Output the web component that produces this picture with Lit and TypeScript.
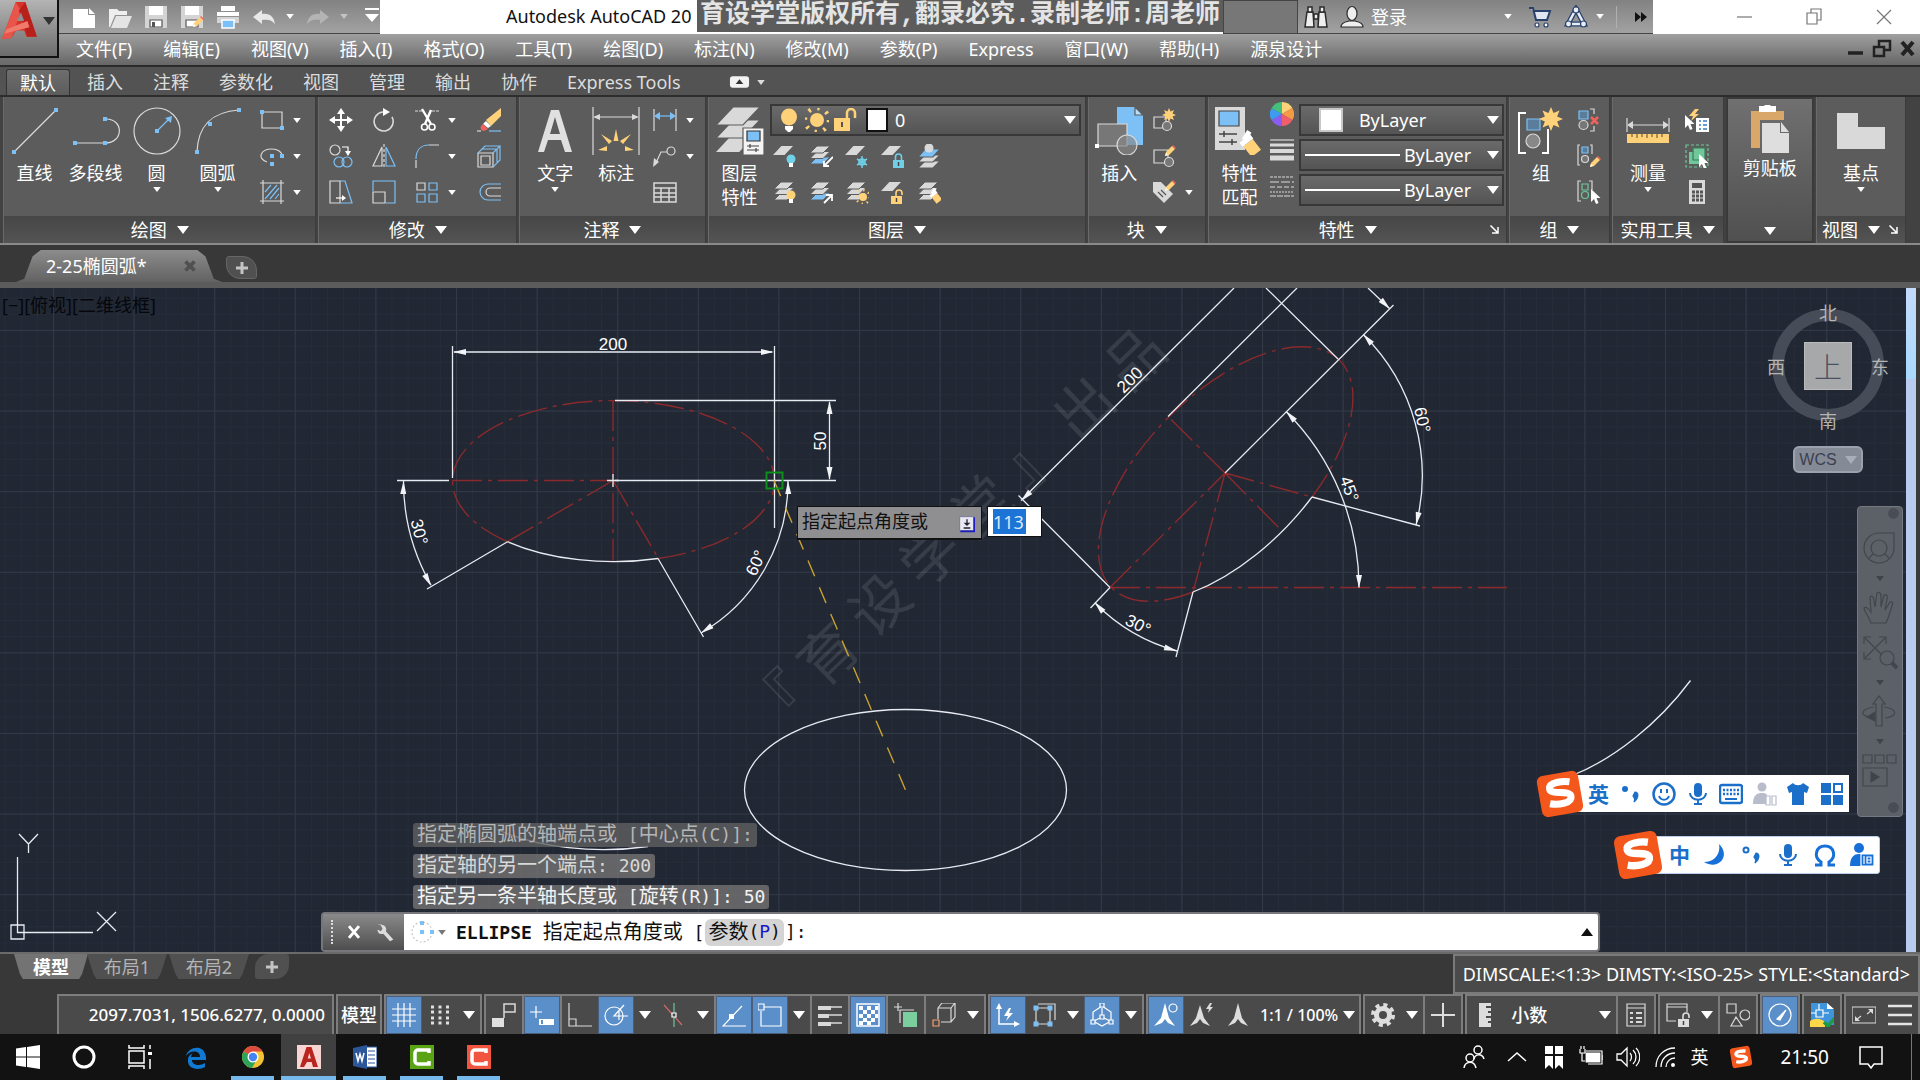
import { LitElement, html, svg, css, nothing } from "lit";
import { customElement } from "lit/decorators.js";
import { classMap } from "lit/directives/class-map.js";

const sq = (x: number, y: number, s = 4) =>
  svg`<rect x=${x - s / 2} y=${y - s / 2} width=${s} height=${s} fill="#7cc0f5" stroke="none"/>`;

const sheet = (x: number, y: number, fill = "#d9d9d9", w = 20, h = 9) =>
  svg`<path d="M${x + w * 0.42} ${y}h${w * 0.58}l${-w * 0.42} ${h}h${-w * 0.58}z" fill=${fill} stroke="none"/>`;

const stack = (top = "#d9d9d9", bottom = "#d9d9d9") => svg`
  <g stroke="#5c5c5c" stroke-width="1">
    <path d="M8 13h13l-7 7H1z" fill=${bottom}/>
    <path d="M8 7.500h13l-7 7H1z" fill="#d9d9d9"/>
    <path d="M8 2h13l-7 7H1z" fill=${top}/>
  </g>`;

const bulb = (x: number, y: number, c: string) => svg`
  <circle cx=${x} cy=${y} r="4.500" fill=${c} stroke="none"/>
  <rect x=${x - 2} y=${y + 4} width="4" height="4" fill="#fff" stroke="none"/>`;

const lock = (x: number, y: number, c: string, open = false) => svg`
  <rect x=${x} y=${y} width="11" height="8" fill=${c} stroke="none"/>
  <path d=${open ? `M${x + 5} ${y}v-3a3 3 0 0 1 6 0v2` : `M${x + 2.5} ${y}v-3a3 3 0 0 1 6 0v3`} stroke=${c} stroke-width="1.600"/>
  <path d="M${x + 5.5} ${y + 2}v4" stroke="#444" stroke-width="1.500"/>`;

const pencil = (x: number, y: number) => svg`
  <g transform="translate(${x} ${y})" stroke="none">
    <path d="M0 10l1-4 6-6 3 3-6 6z" fill="#ffd27a"/>
    <path d="M7 0l1-1 3 3-1 1z" fill="#f0635c"/><path d="M0 10l1-3 2 2z" fill="#fff"/>
  </g>`;

const star = (x: number, y: number, r: number) => {
  const pts: string[] = [];
  for (let i = 0; i < 16; i++) {
    const a = (Math.PI * i) / 8;
    const k = i % 2 ? r * 0.55 : r;
    pts.push(`${x + Math.sin(a) * k},${y - Math.cos(a) * k}`);
  }
  return svg`<polygon points=${pts.join(" ")} fill="#ffd27a" stroke="none"/>`;
};

const sun = (x: number, y: number, r: number) => svg`
  <circle cx=${x} cy=${y} r=${r} fill="#ffd27a" stroke="none"/>
  <circle cx=${x} cy=${y} r=${r * 1.7} stroke="#ffd27a" stroke-width=${r * 0.6} stroke-dasharray="${r * 0.35} ${r * 0.985}"/>`;

const brush = (x: number, y: number) => svg`
  <g transform="translate(${x} ${y}) rotate(-38)" stroke="none">
    <rect x="-3.500" y="-1" width="7" height="8" fill="#ffd27a"/><rect x="-4" y="-4" width="8" height="3" fill="#fff"/>
    <rect x="-1.500" y="-9" width="3" height="6" fill="#fff" transform="rotate(70 0 -4)"/>
  </g>`;

const cursor = (x: number, y: number) =>
  svg`<path transform="translate(${x} ${y})" d="M0 0v13l3-3 2 5 2.500-1-2-5h4z" fill="#fff" stroke="none"/>`;

const sLogo = svg`
  <g transform="rotate(-10 12 12)">
    <rect x="2" y="2" width="20" height="20" rx="3" fill="#f4571c" stroke="none"/>
    <path d="M17.500 7c-3-1-10-1.500-10 1.700 0 3.300 9.500 2 9.500 5.300 0 3.200-6.500 3.300-10.500 1.800" stroke="#fff" stroke-width="3.400"/>
  </g>`;

const aMark = (c: string) => svg`<path d="M9.500 2h5l6.500 20h-5l-1.400-5H10l-3 5H3z M10.700 13.500h3.200L12.300 8z" fill=${c} fill-rule="evenodd" stroke="none"/>`;

const ICONS: Record<string, any> = {
  appLogo: svg`
    <path d="M13 0h9l11 33h-10l-2-6h-8l-4 7-9 1z" fill="#d8332b"/><path d="M13 0L0 35l9-1L18 8z" fill="#e8554b"/>
    <path d="M22 0l11 33h-9L16 8z" fill="#b8201c"/><path d="M4 26l20-8 2 6-24 6z" fill="#f07b6c"/><path d="M14 18l4-8 3 8z" fill="#8f8f8f"/>`,
  newDoc: svg`<path d="M1 4h15v6h7v13H1z M17 3l6 6h-6z" fill="#fff" stroke="none"/>`,
  open: svg`<path d="M1 4h8l2 2h8v4H7L2 22H1z" fill="#eee" stroke="none"/><path d="M8 11h16l-5 12H3z" fill="#e4e4e4" stroke="none"/>`,
  save: svg`<path d="M1 1h22v22H1z" fill="#d4d4d4" stroke="none"/><path d="M5 1h14v9H5z" fill="#fff" stroke="none"/><path d="M6 15h12v7H6z" fill="#fff" stroke="#555"/><path d="M8 17h3v5H8z" fill="#555" stroke="none"/>`,
  saveAs: svg`<path d="M1 1h22v22H1z" fill="#d4d4d4" stroke="none"/><path d="M5 1h14v9H5z" fill="#fff" stroke="none"/><path d="M6 15h12v7H6z" fill="#fff" stroke="#555"/>${pencil(13, 12)}`,
  print: svg`<path d="M5 1h14v5H5z" fill="#fff" stroke="none"/><path d="M1 7h22v4H1z" fill="#fff" stroke="none"/><path d="M1 12h22v6H1z" fill="#d4d4d4" stroke="none"/><path d="M6 15h12v8H6z" fill="#7cc0f5" stroke="#fff" stroke-width="1.500"/>`,
  undo: svg`<path d="M1 12l9-7v4c8-1 12 3 13 10-3-4-7-5-13-4v4z" fill="#e8e8e8" stroke="none"/>`,
  redo: svg`<path d="M23 12l-9-7v4C6 8 2 12 1 19c3-4 7-5 13-4v4z" fill="#b4b4b4" stroke="none"/>`,
  qatMore: svg`<path d="M5 4h14" stroke="#fff" stroke-width="2"/><path d="M5 9h14l-7 8z" fill="#fff" stroke="none"/>`,
  binoc: svg`<g fill="#eee" stroke="#2b2b2b" stroke-width="1.500"><path d="M3 7h6l1 15H1z M15 7h6l2 15h-9z"/><path d="M4 2h4v5H4z M16 2h4v5h-4z M10 9h4v5h-4z"/></g>`,
  user: svg`<g fill="#eee" stroke="#2b2b2b" stroke-width="1.200"><path d="M1 22c0-5 5-5 8-6h6c3 1 8 1 8 6z"/><ellipse cx="12" cy="8.500" rx="5" ry="7"/></g>`,
  cart: svg`<path d="M1 3h4l3 12h11l3-9H6" fill="#dfe6ef" stroke="#28406b" stroke-width="2"/><circle cx="9" cy="20" r="2" fill="#fff" stroke="#28406b"/><circle cx="18" cy="20" r="2" fill="#fff" stroke="#28406b"/>`,
  share: svg`<path d="M12 4L4 19h16z" stroke="#28406b" stroke-width="5"/><path d="M12 4L4 19h16z" stroke="#e8edf5" stroke-width="2.500"/><g fill="#e8edf5" stroke="#28406b"><circle cx="12" cy="5" r="3"/><circle cx="4.500" cy="19" r="3"/><circle cx="19.500" cy="19" r="3"/></g>`,
  more: svg`<path d="M6 7l6 5-6 5z M12 7l6 5-6 5z" fill="#111" stroke="none"/>`,
  winMin: svg`<path d="M5 12h15" stroke="#777"/>`,
  winMax: svg`<path d="M5 8h10v11H5z M9 8V4h10v11h-4" stroke="#777"/>`,
  winClose: svg`<path d="M5 5l14 14M19 5L5 19" stroke="#777"/>`,
  docMin: svg`<path d="M4 16h15" stroke="#222" stroke-width="3.500"/>`,
  docMax: svg`<path d="M4 10h10v9H4z M9 10V4h11v9h-6" stroke="#222" stroke-width="2.500"/>`,
  docClose: svg`<path d="M6 5l11 13M17 5L6 18" stroke="#222" stroke-width="4"/>`,
  line: svg`<path d="M3 45L45 3"/>${sq(3, 45)}${sq(45, 3)}`,
  pline: svg`<path d="M3 36h30c19 0 19-24 1-24"/>${sq(3, 36)}${sq(33, 36)}${sq(33, 12)}`,
  circle: svg`<circle cx="24" cy="24" r="23"/><path d="M24 24L36 12" stroke="#7cc0f5"/><path d="M39 9l-1 7-6-5z" fill="#7cc0f5" stroke="none"/>${sq(24, 24)}`,
  arc: svg`<path d="M3 45C4 18 18 5 45 3"/>${sq(3, 45)}${sq(16, 17)}${sq(45, 3)}`,
  rect: svg`<path d="M2 4h20v16H2z"/>${sq(2, 4)}${sq(22, 20)}`,
  ellipse: svg`<path d="M7 18C-3 15 0 5 12 5c6 0 10 3 10 7"/>${sq(12, 12)}${sq(22, 12)}${sq(12, 20)}`,
  hatch: svg`<path d="M0 3h24M0 21h24M3 0v24M21 0v24"/><path d="M5 12l6-7M5 19L17 5M10 19l9-11M15 19l4-5" stroke="#7cc0f5"/>`,
  move: svg`<path d="M12 2v20M2 12h20" stroke="#fff" stroke-width="2"/><path d="M12 0l4 6H8z M12 24l4-6H8z M0 12l6-4v8z M24 12l-6-4v8z" fill="#fff" stroke="none"/>`,
  rotate: svg`<path d="M11 4a9.500 9.500 0 1 0 9 5" stroke-width="1.600"/><path d="M11 0l7 4-7 4z" fill="#fff" stroke="none"/>`,
  trim: svg`<path d="M0 3h9M17 3h7" stroke-dasharray="3 1"/><path d="M7 1l9 15M16 2l-6 14" stroke="#fff" stroke-width="2.400"/><circle cx="9.500" cy="19" r="3" stroke="#fff" stroke-width="1.600"/><circle cx="17" cy="19" r="3" stroke="#fff" stroke-width="1.600"/>`,
  erase: svg`<path d="M9 12L24 0v8L14 18z" fill="#ffd27a" stroke="none"/><path d="M9 13l5 5-3 2-5-4z" fill="#fff" stroke="none"/><path d="M6 16l5 5-4 2c-3 0-4-3-3-5z" fill="#f0635c" stroke="none"/><path d="M0 23h4"/><path d="M12 23h12" stroke="#7cc0f5"/>`,
  copy: svg`<circle cx="6" cy="6" r="5"/><circle cx="10" cy="18" r="5" stroke="#7cc0f5"/><circle cx="18" cy="18" r="5" stroke="#7cc0f5"/><path d="M13 3h6v4" stroke="#fff"/><path d="M16 7h6l-3 5z" fill="#fff" stroke="none"/>`,
  mirror: svg`<path d="M10 3v19H1z"/><path d="M14 3v19h9z" stroke="#7cc0f5"/><path d="M12 0v24" stroke-dasharray="3 2"/>`,
  fillet: svg`<path d="M1 15C1 6 6 1 14 1" stroke="#7cc0f5"/><path d="M14 1h10M1 16v8"/>`,
  box3d: svg`<path d="M1 9h15v14H1z"/><path d="M4 12h9v9H4z"/><path d="M1 9l7-7h15l-7 7M23 2v14l-7 7M20 5v13M5 5h14" stroke="#7cc0f5"/>`,
  stretch: svg`<path d="M1 1h10v22H1z"/><path d="M11 1h5l7 22H11" stroke="#7cc0f5"/><path d="M7 18h8" stroke="#fff"/><path d="M13 15l4 3-4 3z" fill="#fff" stroke="none"/>`,
  scale: svg`<path d="M1 11V1h22v22H14" stroke="#7cc0f5"/><path d="M1 12h12v11H1z"/>`,
  array: svg`<path d="M2 3h8v7H2z"/><path d="M14 3h8v7h-8z M2 14h8v8H2z M14 14h8v8h-8z" stroke="#7cc0f5"/>`,
  offset: svg`<path d="M24 8H13a4 4 0 0 0 0 8h11"/><path d="M24 4H11a8 8 0 0 0 0 16h13" stroke="#7cc0f5"/>`,
  text: svg`<path d="M20 3h8l13 42h-7l-4-12H17l-4 12H7z M19 27h10L24 10z" fill="#e0e0e0" stroke="none" fill-rule="evenodd"/>`,
  dim: svg`<path d="M1 0v48M47 0v48M4 10h40"/><path d="M1 10l7-3v6z M47 10l-7-3v6z" fill="#d9d9d9" stroke="none"/>
    <g fill="#ffd27a" stroke="none"><path d="M21.500 34l2.500-12 2.500 12z M17 37l-8-10 11 7z M31 37l8-10-11 7z M15 44l-9-1 9-4z M33 44l9-1-9-4z"/></g>`,
  linear: svg`<path d="M1 1v22M23 1v22"/><path d="M4 8h16" stroke="#7cc0f5"/><path d="M1 8l6-4v8z M23 8l-6-4v8z" fill="#7cc0f5" stroke="none"/>`,
  leader: svg`<path d="M2 21l6-13h6"/><circle cx="18" cy="7" r="4"/><path d="M0 23l1-9 5 4z" fill="#d9d9d9" stroke="none"/>`,
  table: svg`<path d="M1 3h22v19H1z M1 8h22M1 13h22M1 17h22M8 8v14M16 8v14" stroke-width="1.500"/>`,
  layers: svg`${sheet(0, 27, "#d9d9d9", 40, 18)}<g stroke="#5c5c5c"><path d="M17 13h27L27 31H0z" fill="#d9d9d9"/><path d="M17 0h27L27 18H0z" fill="#d9d9d9"/></g>
    <path d="M27 21h21v27H27z" fill="#f4f4f4" stroke="#5c5c5c"/><path d="M31 24h13v10H31z" fill="#7cc0f5" stroke="#333"/><path d="M31 39h12M31 43h12M34 37v4M40 41v4" stroke="#444"/>`,
  bulb: svg`<ellipse cx="12" cy="9" rx="8" ry="8.500" fill="#ffd27a" stroke="none"/><path d="M8 18h8v3l-3 3h-2l-3-3z" fill="#fff" stroke="none"/>`,
  sunBig: svg`${sun(12, 12, 7)}`,
  lockBig: svg`<path d="M1 10h16v13H1z" fill="#ffd27a" stroke="none"/><path d="M14 10V5a4 4 0 0 1 8 0v5" stroke="#ffd27a" stroke-width="2.500"/><path d="M9 14v5" stroke="#555" stroke-width="2"/>`,
  layOff: svg`${sheet(0, 2)}${bulb(18, 15, "#6fd0e8")}`,
  layPrev: svg`${stack("#d9d9d9", "#7cc0f5")}<path d="M24 13l-8 8M15 17v5h5" stroke="#fff" stroke-width="1.800"/>`,
  layFrz: svg`${sheet(0, 2)}<g stroke="#6fd0e8" stroke-width="1.500"><path d="M17 12v12M12 15l10 6M22 15l-10 6"/><circle cx="17" cy="18" r="3"/></g>`,
  layLock: svg`${sheet(0, 2)}${lock(12, 16, "#6fd0e8")}`,
  layCur: svg`<g stroke="#5c5c5c"><path d="M8 17h15l-7 7H1z" fill="#d9d9d9"/><path d="M8 11h15l-7 7H1z" fill="#d9d9d9"/><path d="M8 5h15l-7 8H1z" fill="#7cc0f5"/></g><circle cx="12" cy="4" r="4.500" fill="#d9d9d9" stroke="none"/>`,
  layOn: svg`${stack()}${bulb(18, 15, "#ffd27a")}`,
  layIso: svg`${stack("#d9d9d9", "#7cc0f5")}<path d="M15 23l8-8M17 15h6v6" stroke="#fff" stroke-width="1.800"/>`,
  layThaw: svg`${stack()}${sun(18, 17, 4)}`,
  layUnlock: svg`${sheet(0, 2)}${lock(10, 16, "#ffd27a", true)}`,
  layMatch: svg`${stack()}${brush(18, 16)}`,
  insert: svg`<path d="M22 0h18l8 8v30H22z" fill="#7cc0f5" stroke="none"/><path d="M40 0v8h8z" fill="#b9defa" stroke="#5c5c5c"/><path d="M3 17h29v22H3z" fill="#777"/><circle cx="32" cy="38" r="10" fill="#888a" /><path d="M0 37h4v4H0z" fill="#fff" stroke="none"/>`,
  blkNew: svg`<path d="M2 9h12v11H2z"/><circle cx="15" cy="18" r="4.500" fill="#777"/>${star(17, 7, 7)}`,
  blkEdit: svg`<path d="M2 6h14v13H2z"/><circle cx="17" cy="18" r="4.500" fill="#777"/>${pencil(13, 2)}`,
  blkAttr: svg`<path d="M1 2h8l12 12-9 9L1 12z" fill="#d9d9d9" stroke="none"/><path d="M6 12l5 5M9 10l5 5" stroke="#555"/>${pencil(13, 1)}`,
  match: svg`<path d="M0 0h30v43H0z" fill="#d9d9d9" stroke="none"/><path d="M4 4h20v15H4z" fill="#7cc0f5" stroke="#444"/><path d="M4 27h18M4 35h18M9 24v6M17 32v6" stroke="#444" stroke-width="1.500"/><g transform="translate(34 37) scale(1.700)">${brush(0, 0)}</g>`,
  wheel: svg`<g stroke="none"><path d="M12 12V0a12 12 0 0 1 10.400 6z" fill="#ffd27a"/><path d="M12 12l10.400-6a12 12 0 0 1 0 12z" fill="#f79a45"/><path d="M12 12l10.400 6A12 12 0 0 1 12 24z" fill="#ee5f6b"/><path d="M12 12v12a12 12 0 0 1-10.400-6z" fill="#8a5cf0"/><path d="M12 12L1.600 18a12 12 0 0 1 0-12z" fill="#3d9cf0"/><path d="M12 12L1.600 6A12 12 0 0 1 12 0z" fill="#45c07b"/></g>`,
  lweight: svg`<path d="M0 2h24" /><path d="M0 7h24" stroke-width="3"/><path d="M0 13h24" stroke-width="4"/><path d="M0 20h24" stroke-width="5"/>`,
  ltype: svg`<path d="M0 3h24" stroke-dasharray="3 1"/><path d="M0 8h24" stroke-dasharray="9 2"/><path d="M0 13h24" stroke-dasharray="5 2"/><path d="M0 18h24" stroke-dasharray="2 1"/><path d="M0 22h24" stroke-dasharray="6 1"/>`,
  group: svg`<path d="M9 6H2v40h7M25 46h6V22" stroke="#fff" stroke-width="2"/><path d="M10 12h13v11H10z" fill="#5b7d9c" stroke="#7cc0f5"/><circle cx="16" cy="34" r="7" fill="#888"/>${star(34, 12, 12)}`,
  grpOff: svg`<path d="M2 3h9v8H2z" fill="#5b7d9c" stroke="#7cc0f5"/><circle cx="6.500" cy="17" r="4.500" fill="#777"/><path d="M13 1h4v5M17 18v5h-4"/><path d="M14 9l7 7M21 9l-7 7" stroke="#f0635c" stroke-width="2.500"/>`,
  grpEdit: svg`<path d="M3 1H1v20h2M13 1h2v9M13 21h0"/><path d="M5 3h6v6H5z" fill="#5b7d9c" stroke="#7cc0f5"/><circle cx="8" cy="15" r="3.500" fill="#777"/>${pencil(13, 13)}`,
  grpSel: svg`<path d="M4 1H1v20h3M12 1h3v9"/><path d="M5 4h6v6H5z" stroke="#6fc79a"/><circle cx="8" cy="15" r="3.500" stroke="#6fc79a"/>${cursor(14, 9)}`,
  measure: svg`<path d="M3 11v14M45 11v14M5 18h38"/><path d="M3 18l6-4v8z M45 18l-6-4v8z" fill="#d9d9d9" stroke="none"/><path d="M3 27h42v9H3z" fill="#ffd27a" stroke="none"/><path d="M8 27v3M13 27v4M18 27v3M23 27v4M28 27v3M33 27v4M38 27v3" stroke="#7a6030"/>`,
  qselect: svg`<path d="M10 1l-6 7h4l-2 5 8-7h-4l4-5z" fill="#ffd27a" stroke="none"/><path d="M11 10h13v14H11z" fill="#fff" stroke="none"/><path d="M14 13h2M14 17h2M14 21h2M18 13h4M18 17h4M18 21h4" stroke="#3a7cc0" stroke-width="1.500"/>${cursor(0, 7)}`,
  selAll: svg`<path d="M1 1h22v22H1z" stroke="#6fc79a" stroke-dasharray="3 2"/><path d="M4 8h12v12H4z" fill="#6fc79a" stroke="none"/><path d="M8 4h12v12H8z" fill="#6fc79a" stroke="#3b7a59"/>${cursor(14, 10)}`,
  calc: svg`<path d="M4 0h16v24H4z" fill="#d9d9d9" stroke="none"/><path d="M7 3h10v5H7z" fill="#555" stroke="none"/><path d="M7 12h3M11 12h3M15 12h3M7 16h3M11 16h3M15 16h3M7 20h3M11 20h3M15 20h3" stroke="#555" stroke-width="3"/>`,
  paste: svg`<path d="M5 6h33v9H14v28H5z" fill="#d9a76a" stroke="none"/><path d="M13 1h5a4 3 0 0 1 7 0h5v6H13z" fill="#fff" stroke="none"/><path d="M16 18h18v10h9v20H16z M35 17l8 10h-8z" fill="#dedede" stroke="none"/>`,
  base: svg`<path d="M0 6h21v14h27v22H0z" fill="#d9d9d9" stroke="none"/>`,
  corner: svg`<path d="M6 6l9 9M16 8v8H8" stroke="#fff" stroke-width="2"/>`,
  minimize: svg`<rect x="1" y="1" width="20" height="12" rx="3" fill="#f2f2f2" stroke="none"/><path d="M11 4l4 5H7z" fill="#333" stroke="none"/>`,
  plus: svg`<path d="M12 6v12M6 12h12" stroke="#c4c4c4" stroke-width="3"/>`,
  cross: svg`<path d="M6 6l12 12M18 6L6 18" stroke="#505050" stroke-width="5"/>`,
  cmdX: svg`<path d="M6 5l12 14M18 5L6 19" stroke="#fff" stroke-width="3.500"/>`,
  wrench: svg`<path d="M3 3l4 1 2 4-2 3-4-2c0 5 4 6 7 5l8 9 4-2-9-10c2-4-2-9-8-8z" fill="#ddd" stroke="none"/>`,
  cmdEl: svg`<circle cx="12" cy="12" r="10" stroke="#c9c9c9" stroke-dasharray="2 2"/>${sq(12, 3)}${sq(12, 12)}${sq(22, 12)}`,
  nWheel: svg`<path d="M17 2h15v16a15 15 0 1 1-15-16z"/><circle cx="17" cy="17" r="8"/><path d="M11 23l-4 4M23 23l4 4"/>`,
  nHand: svg`<path d="M9 33C6 25 2 21 2 18c2-2 5 1 7 4L8 7c2-2 4 0 4 4l1 6 2-14c3-2 4 1 4 4v10l3-12c3-1 4 1 3 4l-2 11 5-8c3-1 3 1 2 4-2 6-3 11-6 17z"/>`,
  nZoom: svg`<path d="M3 3l20 20M23 3L3 23M2 9V2h7M17 2h7v7M2 17v7h7"/><circle cx="25" cy="23" r="7" fill="#5c6067"/><path d="M30 28l5 5" stroke-width="4"/>`,
  nOrbit: svg`<path d="M14 32V10h-3l6-8 6 8h-3v22z"/><path d="M12 13C-2 15-2 22 8 23M22 13c14 2 14 9 1 11"/><path d="M5 23l8-5v9z" fill="#3f4349"/>`,
  nShow: svg`<path d="M1 2h9v8H1z M13 2h9v8h-9z M25 2h9v8h-9z M1 15h24v18H1z"/><path d="M9 19l8 5-8 5z" fill="#3f4349"/>`,
  nDot: svg`<circle cx="12" cy="12" r="9" fill="#4a4e55"/><path d="M8 8l8 8M16 8l-8 8"/>`,
  grid: svg`<path d="M6 0v24M12 0v24M18 0v24M0 6h24M0 12h24M0 18h24" stroke="#fff"/>`,
  dots: svg`<path d="M3 4h18M3 9h18M3 15h18M3 20h18" stroke="#e0e0e0" stroke-width="3" stroke-dasharray="3 4.500"/>`,
  infer: svg`<path d="M0 15h12v9H0z" fill="#e0e0e0" stroke="none"/><path d="M12 15V1h11v8H12" stroke-width="1.500"/>`,
  dyn: svg`<path d="M6 3v12M0 9h12" stroke="#fff"/><path d="M9 16h15v6H9z" fill="#fff" stroke="none"/><path d="M11 17h2v4h-2z" fill="#5b8fc9" stroke="none"/>`,
  ortho: svg`<path d="M1 0v23h23M1 16h7v7"/>`,
  polar: svg`<circle cx="10" cy="13" r="9" stroke="#fff"/><path d="M24 13H10L20 2M15 7v10" stroke="#fff"/>`,
  iso: svg`<path d="M2 2l18 20" stroke="#d06a6a"/><path d="M12 0v24" stroke="#6fc79a"/><path d="M10 10h4v4h-4z" fill="#4a4a4a" stroke="#fff"/>`,
  track: svg`<path d="M20 3L1 23h23" stroke="#fff"/><path d="M7 11h5v5H7z" fill="#fff" stroke="none"/>`,
  snap: svg`<path d="M6 4h17v19H3V8" stroke="#fff"/><path d="M0 1h6v6H0z" stroke="#fff"/>`,
  lw: svg`<path d="M0 4h24M0 12h24M0 20h24" stroke-width="1.500"/><path d="M0 5h13M0 13h11M0 21h13" stroke-width="4"/>`,
  trans: svg`<path d="M1 1h22v22H1z" stroke="#fff" stroke-width="1.500"/><path d="M3 3h4v4H3z M11 3h4v4h-4z M7 7h4v4H7z M15 7h4v4h-4z M3 11h4v4H3z M11 11h4v4h-4z M7 15h4v4H7z M15 15h4v4h-4z M3 18h4v4H3z M11 18h4v4h-4z M19 3h3v4h-3z M19 11h3v4h-3z" fill="#fff" stroke="none"/>`,
  cycle: svg`<path d="M4 0v8M0 4h8M6 20V7h14"/><path d="M9 9h14v15H9z" fill="#7bcf9f" stroke="none"/>`,
  cube: svg`<path d="M6 5h13v14H9M6 5v11M6 5l4-5h13l-4 5M23 0v14l-4 5"/><path d="M1 17h6v6H1z" stroke="#f0a070"/>`,
  ducs: svg`<path d="M3 4v17h18" stroke="#fff" stroke-width="1.500"/><path d="M0 6l3-6 3 6z M18 18l6 3-6 3z M13 5l-5 8h4l-2 5 7-8h-4l2-5z" fill="#fff" stroke="none"/>`,
  filter: svg`<path d="M4 5h14v16H4z M6 1h17v16" />${sq(4, 5, 5)}${sq(18, 5, 5)}${sq(4, 21, 5)}${sq(18, 21, 5)}`,
  gizmo: svg`<g stroke="#fff"><path d="M12 5v9l-8 4M12 14l8 4M12 3L3 9v9l9 5 9-5V9z"/><path d="M10 0h4v4h-4z M1 17h4v4H1z M19 17h4v4h-4z M10 12h4v4h-4z" fill="#5b8fc9"/></g>`,
  annoA: svg`<path d="M11 0l4 15 6 8-7-3-3-4-3 4-8 3 7-8z" fill="#fff" stroke="none"/><circle cx="19" cy="5" r="4" stroke="#fff"/>`,
  annoB: svg`<path d="M10 2l4 13 6 8-7-3-3-4-3 4-7 3 6-8z M20 0l-4 6h3l-1 4 5-6h-3l2-4z" fill="#ddd" stroke="none"/>`,
  annoC: svg`<path d="M12 0l4 15 6 8-7-3-3-4-3 4-7 3 6-8z" fill="#ddd" stroke="none"/>`,
  gear: svg`<circle cx="12" cy="12" r="6.500" stroke="#ddd" stroke-width="5"/><circle cx="12" cy="12" r="10" stroke="#ddd" stroke-width="4" stroke-dasharray="4 3.854"/>`,
  plusBig: svg`<path d="M12 0v24M0 12h24" stroke="#ddd" stroke-width="2"/>`,
  ruler: svg`<path d="M6 0h12v3h-5v2h5v3h-3v2h3v3h-5v2h5v3h-3v2h3v4H6z" fill="#ddd" stroke="none"/>`,
  props: svg`<path d="M3 1h18v22H3z M3 5h18"/><path d="M6 10h3M6 15h3M6 19h3M12 10h6M12 15h6M12 19h6" stroke-width="2"/>`,
  winLock: svg`<path d="M10 18H1V1h20v8M1 4h20"/>${lock(12, 16, "#ddd", true)}`,
  shapes: svg`<path d="M1 1h9v9H1z M10 14l6 9H5z"/><circle cx="19" cy="12" r="5"/>`,
  perf: svg`<circle cx="12" cy="12" r="11" stroke="#fff"/><path d="M9 16L18 7l-6 10z" fill="#fff" stroke="#fff"/>`,
  hardware: svg`<path d="M1 0h16l7 7v15H1z" fill="#3f95dc" stroke="none"/><path d="M17 0v6h7z" fill="#fff" stroke="none"/><path d="M6 7h7v7H6z M9 1v6M1 10h5M13 10h6" stroke="#fff"/><path d="M0 18c6-4 12-2 15 1v5H0z" fill="#ffd84a" stroke="none"/><path d="M14 19l4 4 7-8" stroke="#1f9a4a" stroke-width="3.500"/>`,
  full: svg`<path d="M0 4h24v16H0z M20 7l-5 4M4 17l5-4"/><path d="M16 6h5v5z M8 18H3v-5z" fill="#ddd" stroke="none"/>`,
  menu: svg`<path d="M0 3h24M0 12h24M0 21h24" stroke="#e4e4e4" stroke-width="2.500"/>`,
  win: svg`<path d="M0 3.500l10-1.500v9.500H0z M11 2l13-2v11.500H11z M0 12.500h10V22L0 20.500z M11 12.500h13V24l-13-2z" fill="#fff" stroke="none"/>`,
  cortana: svg`<circle cx="12" cy="12" r="10" stroke="#fff" stroke-width="3"/>`,
  taskview: svg`<path d="M1 6h15v12H1z M1 0v3h15V0M1 24v-3h15v3M22 0v4M22 14v10" stroke="#fff" stroke-width="1.500"/><path d="M20 7h4v3h-4z" fill="#fff" stroke="none"/>`,
  edge: svg`<path d="M2 11C4 2 20-2 22 12v3H8c0 6 9 6 13 3v4C14 26 3 24 4 15c0-4 3-6 5-7-1 1-2 2-2 4h9c0-7-10-7-14-1z" fill="#1079d2" stroke="none"/>`,
  chrome: svg`<g stroke="none"><circle cx="12" cy="12" r="11" fill="#f2c230"/><path d="M12 12L2.500 6.500A11 11 0 0 1 21.500 6.500H12z" fill="#dd4b3e"/><path d="M12 12L2.500 6.500A11 11 0 0 0 11 23l5-9z" fill="#2ea35a"/><circle cx="12" cy="12" r="5.500" fill="#fff"/><circle cx="12" cy="12" r="4.200" fill="#4284f3"/></g>`,
  acad: svg`<path d="M0 0h24v24H0z" fill="#f6d5d2" stroke="none"/>${aMark("#b9241f")}`,
  word: svg`<path d="M12 2h12v20H12z" fill="#fff" stroke="#2b579a"/><path d="M15 6h7M15 10h7M15 14h7M15 18h7" stroke="#2b579a"/><path d="M0 3l14-3v24L0 21z" fill="#2b579a" stroke="none"/><path d="M3 8l2 8 2-7 2 7 2-8" stroke="#fff" stroke-width="1.500"/>`,
  camG: svg`<path d="M0 0h24v24H0z" fill="#5aa314" stroke="none"/><path d="M19 8V5H8a3 3 0 0 0-3 3v8a3 3 0 0 0 3 3h11v-3" stroke="#fff" stroke-width="3.500"/>`,
  camR: svg`<path d="M0 0h24v24H0z" fill="#f2553f" stroke="none"/><path d="M19 8V5H8a3 3 0 0 0-3 3v8a3 3 0 0 0 3 3h11v-3" stroke="#fff" stroke-width="3.500"/>`,
  people: svg`<g stroke="#fff" stroke-width="1.500"><circle cx="16" cy="5" r="4"/><path d="M12 14c1-5 8-6 10 0"/><circle cx="8" cy="13" r="4"/><path d="M2 23c1-7 10-8 12 0"/></g>`,
  chevUp: svg`<path d="M3 16l9-8 9 8" stroke="#fff" stroke-width="1.500"/>`,
  flagTray: svg`<path d="M3 1h8v8H3z M13 1h8v8h-8z M3 11h8v13l-4-4-4 4z M13 11h8v13l-4-4-4 4z" fill="#fff" stroke="none"/>`,
  battery: svg`<path d="M6 7h16v11H6z" fill="#fff" stroke="#121212"/><path d="M7 6h16v13H9" stroke="#fff"/><path d="M24 10v5M1 4v4h5V4M3 8v8h3M2 1v3M5 1v3" stroke="#fff"/>`,
  sound: svg`<g stroke="#fff" stroke-width="1.300"><path d="M1 9h4l6-6v18l-6-6H1z M14 8c2 2 2 6 0 8M17 5c4 4 4 10 0 14M20 3c5 5 5 13 0 18"/></g>`,
  wifi: svg`<g stroke="#fff" stroke-width="1.300"><path d="M3 22C3 11 11 3 22 3M8 22c0-8 6-14 14-14M13 22c0-5 4-9 9-9"/></g><circle cx="20" cy="20" r="2" fill="#fff" stroke="none"/>`,
  sLogo,
  notif: svg`<path d="M1 2h22v17h-8l-3 4-3-4H1z" stroke="#fff" stroke-width="1.500"/>`,
  comma: svg`<circle cx="6" cy="7" r="3" fill="#1b6fc9" stroke="none"/><path d="M16 10c4 0 4 6-1 10 2-4 0-4-1-6z" fill="#1b6fc9" stroke="#1b6fc9"/>`,
  comma2: svg`<circle cx="6" cy="7" r="2.500" stroke="#1b6fc9" stroke-width="2"/><path d="M16 10c4 0 4 6-1 10 2-4 0-4-1-6z" fill="#1b6fc9" stroke="#1b6fc9"/>`,
  smile: svg`<circle cx="12" cy="12" r="10.500" stroke="#1b6fc9" stroke-width="2.500"/><path d="M9 7v4M15 7v4M7 14c2 5 8 5 10 0" stroke="#1b6fc9" stroke-width="2"/>`,
  mic: svg`<rect x="8" y="1" width="8" height="14" rx="4" fill="#1b6fc9" stroke="none"/><path d="M4 11c0 9 16 9 16 0M12 18v5M8 22h8" stroke="#1b6fc9" stroke-width="2"/>`,
  keyb: svg`<rect x="1" y="3" width="22" height="18" rx="2" stroke="#1b6fc9" stroke-width="2.500"/><path d="M4 8h16M4 12h16" stroke="#1b6fc9" stroke-width="2.500" stroke-dasharray="2 1.500"/><path d="M6 17h12" stroke="#1b6fc9" stroke-width="2"/>`,
  person: svg`<circle cx="9" cy="5" r="4.500" fill="#b9bccb" stroke="none"/><path d="M0 22c0-9 4-11 9-11s5 2 5 3v8z" fill="#b9bccb" stroke="none"/><path d="M13 14h4v9h-4z M19 14h4v9h-4z" fill="#fff" stroke="#b9bccb"/>`,
  person2: svg`<circle cx="9" cy="5" r="5" fill="#1670d8" stroke="none"/><path d="M0 23c0-9 4-12 9-12h6v12z" fill="#1670d8" stroke="none"/><path d="M11 11h13v12H11z" fill="#1670d8" stroke="#fff"/><path d="M14 13v8M17 14h4v6h-4z M17 17h4" stroke="#fff"/>`,
  shirt: svg`<path d="M7 1c2 3 8 3 10 0l6 4-2 6-3-1v13H6V10l-3 1-2-6z" fill="#1b6fc9" stroke="none"/>`,
  tiles: svg`<path d="M1 1h10v10H1z M1 13h10v10H1z M13 13h10v10H13z" fill="#1b6fc9" stroke="none"/><path d="M14 2h8v8h-8z" stroke="#1b6fc9" stroke-width="2"/>`,
  moon: svg`<path d="M16 1c12 11 0 27-15 18 10 0 17-8 15-18z" fill="#1670d8" stroke="none"/>`,
  omega: svg`<path d="M2 22h6v-3C0 14 3 3 12 3s12 11 4 16v3h6" stroke="#1670d8" stroke-width="3"/>`,
  prompt: svg`<path d="M1 1h21v21H1z" fill="#e8e8f0" stroke="#6a6a9a"/><path d="M2 23h21V2" stroke="#1c1cc0" stroke-width="2.500"/><path d="M12 5v6M7 18h10" stroke="#223" stroke-width="2"/><path d="M7 10h10l-5 5z" fill="#223" stroke="none"/>`,
};

const ico = (name: string, cls = "i24", box = 24) =>
  html`<svg class=${cls} viewBox="0 0 ${box} ${box}" fill="none" stroke="#d9d9d9" stroke-width="1.2" aria-hidden="true">${ICONS[name]}</svg>`;

const caret = (cls = "caret") => html`<svg class=${cls} viewBox="0 0 12 8" aria-hidden="true"><path d="M0 0h12l-6 8z" fill="currentColor"/></svg>`;

const big = (icon: string, label: any, arrow = false) => html`
  <button class="big">${ico(icon, "i48", 48)}<span class="biglabel">${label}</span>${arrow ? caret("caret tiny") : nothing}</button>`;

const small = (icon: string, label: string, arrow = false) => html`
  <button class="small" aria-label=${label} title=${label}>${ico(icon)}${arrow ? caret("caret tiny") : nothing}</button>`;

@customElement("cad-panel")
export class CadPanel extends LitElement {
  static properties = { name: {}, corner: { type: Boolean } };
  declare name: string;
  declare corner: boolean;
  static styles = css`
    :host { display: flex; flex-direction: column; min-width: 0; background: #5c5c5c; border-left: 1px solid #6a6a6a; border-right: 1px solid #3c3c3c; box-sizing: border-box; }
    .body { display: flex; flex: 1; }
    .foot { display: flex; justify-content: center; align-items: center; height: 27px; background: linear-gradient(#464646, #545454); }
    button { font: inherit; color: #fff; background: none; border: 0; padding: 0; display: flex; align-items: center; gap: 10px; white-space: nowrap; }
    .name { flex: 1; justify-content: center; }
    .caret { width: 12px; height: 8px; }
    .corner { width: 20px; }
    .i20 { width: 18px; height: 18px; }
  `;
  render() {
    return html`<div class="body"><slot></slot></div>
      <div class="foot"><button class="name">${this.name}${caret()}</button>
      ${this.corner ? html`<button class="corner" aria-label="更多选项">${ico("corner", "i20")}</button>` : nothing}</div>`;
  }
}

const head = (x: number, y: number, a: number) =>
  svg`<polygon points="0,0 -13,-3 -13,3" transform="translate(${x} ${y}) rotate(${a})" fill="#f2f4f8"/>`;

const note = (x: number, y: number, a: number, t: string) =>
  svg`<text class="note" transform="translate(${x} ${y}) rotate(${a})" text-anchor="middle" dominant-baseline="central">${t}</text>`;

@customElement("cad-drawing")
export class CadDrawing extends LitElement {
  static styles = css`
    :host { display: block; position: absolute; inset: 0; }
    svg { display: block; width: 100%; height: 100%; }
    .white { stroke: #e8ebf2; stroke-width: 1.3; fill: none; }
    .red { stroke: #8b2a2c; stroke-width: 1.4; fill: none; stroke-dasharray: 30 6 4 6; }
    .note { font: 17px "Liberation Sans", sans-serif; fill: #fff; }
    .faint { font: 58px "Noto Sans CJK SC", sans-serif; fill: #fff; fill-opacity: 0.1; }
    .major { stroke: #323947; }
    .minor { stroke: #262c39; }
  `;
  render() {
    return html`<svg viewBox="0 288 1920 664" preserveAspectRatio="xMinYMin slice" role="img" aria-label="椭圆弧图形">
      <defs>
        <pattern id="fine" x="4.600" y="7.400" width="16.120" height="16.120" patternUnits="userSpaceOnUse"><path class="minor" d="M.5 0V17M0 .5H17" /></pattern>
        <pattern id="coarse" x="53" y="330" width="80.600" height="80.600" patternUnits="userSpaceOnUse"><path class="major" d="M.5 0V81M0 .5H81" /></pattern>
      </defs>
      <rect y="288" width="1920" height="664" fill="#212733"/>
      <rect y="288" width="1920" height="664" fill="url(#fine)"/>
      <rect y="288" width="1920" height="664" fill="url(#coarse)"/>
      <text class="faint" transform="translate(771 739) rotate(-44)">『 育 设 学 堂 』 出 品</text>
      <g class="red">
        <path d="M507.500 541.700A161 80.500 0 1 1 658 558.500"/>
        <path d="M452 480.500H613M613 401V561M613 480.500L507.500 541.700M613 480.500L658 558"/>
        <path d="M1193 592A161 80.500 -45 1 1 1312 497"/>
        <path d="M1110 587.500L1225 473M1225 473L1168 416.500M1225 473L1193 592M1225 473L1281.500 530.500M1225 473L1312 497M1110 587.500H1507"/>
      </g>
      <g class="white">
        <path d="M452.500 346V478M774.500 346V528M454 352H772M615 400.500H836M829.500 402V479M615 480.500H836M397 480.500H449"/>
        <path d="M607 480.500H619M613 474V487M507.500 541.700L427 589M658 558.500L703.500 637"/>
        <path d="M403.500 480.500A210 210 0 0 0 431 585M788 480.500A175 175 0 0 1 701 633"/>
        <path d="M507.500 541.700A161 80.500 0 0 0 658 558.500M497.500 829.700A161 80.500 0 0 0 648 846.500"/>
        <ellipse cx="905.500" cy="790" rx="161" ry="80.500"/>
        <path d="M1110 587.500L1018.500 495.500M1021 500.500L1234 288M1168 416.500L1297 288M1266 288L1338 359M1368 288L1390 309M1225 473L1393.500 305"/>
        <path d="M1110 587.500L1090.500 608M1193 592L1176 657M1312 497L1420 526"/>
        <path d="M1095 603A184 184 0 0 0 1177 651M1363.700 335A198 198 0 0 1 1416 525M1286 411.500A249 249 0 0 1 1359 587.500"/>
        <path d="M1193 592A161 80.500 -45 0 0 1312 497M1571 776A161 80.500 -45 0 0 1690.500 680.500"/>
      </g>
      ${head(453, 352, 180)}${head(774, 352, 0)}${head(829.5, 401, -90)}${head(829.5, 480, 90)}
      ${head(403.5, 481, -89)}${head(431, 586, 62)}${head(788, 481, -91)}${head(701, 633, 146)}
      ${head(1021, 501, 135)}${head(1390, 309, 45)}${head(1094.5, 602, -132)}${head(1177, 651, 16)}
      ${head(1363, 334, -132)}${head(1416, 525, 102)}${head(1286, 411, -132)}${head(1359, 588, 90)}
      ${note(613, 344, 0, "200")}${note(820, 441, -90, "50")}${note(419, 532, 76, "30°")}${note(756, 563, -66, "60°")}
      ${note(1130, 380, -45, "200")}${note(1138, 625, 27, "30°")}${note(1422, 420, 78, "60°")}${note(1349, 489, 70, "45°")}
      <path d="M774 480.500L905.500 790" stroke="#c9a230" stroke-width="1.400" stroke-dasharray="17 12" fill="none"/>
      <rect x="766.500" y="472.500" width="16" height="16" fill="none" stroke="#0d8f1a" stroke-width="2"/>
      <g class="white"><path d="M11 925H24V939H11ZM17.500 857V932.500H93M19 834L28.500 844L38 834M28.500 844V853M97 912L116 931M116 912L97 931"/></g>
    </svg>`;
  }
}

const MENUS = ["文件(F)", "编辑(E)", "视图(V)", "插入(I)", "格式(O)", "工具(T)", "绘图(D)", "标注(N)", "修改(M)", "参数(P)", "Express", "窗口(W)", "帮助(H)", "源泉设计"];
const TABS = ["默认", "插入", "注释", "参数化", "视图", "管理", "输出", "协作", "Express Tools"];

type Cell = string | { i: string; on?: boolean };
const on = (i: string): Cell => ({ i, on: true });

@customElement("app-root")
export class AppRoot extends LitElement {
  static styles = css`
    :host { display: flex; flex-direction: column; min-height: 100vh; background: #383838; color: #fff; font: 18px/24px "Noto Sans", "Noto Sans CJK SC", sans-serif; overflow: hidden; }
    * { box-sizing: border-box; }
    button, input, select { font: inherit; color: inherit; background: none; border: 0; padding: 0; margin: 0; border-radius: 0; }
    button { display: inline-flex; align-items: center; justify-content: center; white-space: nowrap; }
    select { appearance: none; }
    svg { flex: none; }
    .i24 { width: 24px; height: 24px; }
    .i48 { width: 48px; height: 48px; }
    .caret { width: 12px; height: 8px; }
    .caret.tiny { width: 8px; height: 5px; }
    .caret.up { transform: rotate(180deg); color: #111; }
    .dim { color: #c4c4c4; }

    .top { display: grid; grid-template-columns: 59px minmax(0, 1fr); grid-template-rows: 34px 31px; background: linear-gradient(#a8a8a8, #6a6a6a); border-bottom: 2px solid #2b2b2b; }
    .logo { grid-row: 1 / span 2; height: 58px; background: linear-gradient(#b4b4b4, #6c6c6c); border-right: 2px solid #111; border-bottom: 2px solid #111; gap: 3px; padding-bottom: 14px; color: #333; }
    .i36 { width: 38px; height: 42px; }
    .titlebar { display: flex; background: #fff; }
    .qat { display: flex; align-items: center; width: 321px; padding-left: 13px; gap: 12px; background: linear-gradient(#828282, #a2a2a2); border-bottom: 1px solid #444; }
    .qat button { gap: 10px; }
    .title { width: 317px; padding-left: 126px; color: #111; line-height: 33px; white-space: nowrap; margin: 0; font-size: 18px; font-weight: 400; overflow: hidden; }
    .notice { height: 32px; padding: 0 3px; background: #5c5c5c; color: #e4e4e4; font: bold 25px/32px "Liberation Mono", "Noto Sans CJK SC", monospace; white-space: nowrap; }
    .searchbox { flex: 1; min-width: 0; background: #777; border: 1px solid #444; }
    .info { display: flex; align-items: center; width: 355px; padding-left: 6px; gap: 12px; background: linear-gradient(#828282, #a2a2a2); border-bottom: 1px solid #444; }
    .info button { gap: 8px; }
    .login { flex: 1; justify-content: space-between; padding-right: 4px; }
    .login span { display: flex; gap: 7px; align-items: center; }
    .split { border-left: 1px solid #b0b0b0; height: 22px; }
    .winctl { display: flex; width: 267px; padding-left: 56px; }
    .winctl button { width: 70px; }
    .menubar { display: flex; align-items: center; padding-left: 17px; background: linear-gradient(#a0a0a0, #666); line-height: 28px; padding-bottom: 2px; }
    .menubar nav { display: flex; gap: 31px; flex: 1; }
    .docctl { display: flex; gap: 2px; }

    .tabs { display: flex; align-items: flex-end; height: 30px; padding-left: 6px; background: #535353; border-bottom: 2px solid #2d2d2d; gap: 4px; color: #dcdcdc; }
    .tabs button { height: 26px; padding: 0 13px; }
    .tabs .sel { background: linear-gradient(#6e6e6e, #5c5c5c); border: 1px solid #333; border-bottom: 0; border-radius: 3px 3px 0 0; color: #fff; }
    .tabs .fold { gap: 7px; padding-left: 31px; }
    .i22 { width: 21px; height: 14px; }

    .ribbon { display: grid; grid-template-columns: 313fr 198fr 187fr 377fr 118fr 299fr 100fr 112fr 88fr 90fr; gap: 2px; padding: 0 14px 0 3px; height: 146px; background: #424242; }
    .big { flex-direction: column; justify-content: flex-start; width: 61px; padding-top: 10px; align-self: flex-start; }
    .biglabel { margin-top: 6px; white-space: pre-line; text-align: center; }
    .big .caret { margin-top: 2px; }
    .inset { padding-left: 5px; display: flex; }
    .grid3 { display: grid; grid-auto-rows: 36px; padding-top: 5px; margin-left: 6px; align-content: start; }
    .grid3.tight { margin-left: 0; }
    .grid3.snug { margin-left: -4px; }
    .small { gap: 9px; padding-left: 6px; justify-content: flex-start; }
    .cols4 { grid-template-columns: 43px 43px 62px 43px; margin-left: 4px; }
    .cols5 { grid-template-columns: repeat(5, 36px); margin: 0; padding-top: 2px; }
    .cols5 .small { padding-left: 3px; }
    .layercol { flex: 1; padding: 7px 4px 0 0; }
    .combo { display: flex; align-items: center; height: 32px; padding: 0 3px 0 5px; gap: 4px; border: 2px solid #383838; background: linear-gradient(#6a6a6a, #545454); }
    .combo select { flex: 1; min-width: 0; height: 100%; }
    .swatch { width: 22px; height: 24px; margin: 0 3px 0 5px; background: #fff; border: 2px solid #111; }
    .swatch.soft { width: 24px; border-color: #c8c8c8; margin: 0 12px 0 13px; }
    .props { display: flex; flex-direction: column; flex: 1; gap: 3px; padding: 7px 2px 0 5px; }
    .stroke { width: 95px; height: 2px; background: #fff; }
    .props .line { padding-left: 4px; }
    .clip { flex-direction: column; justify-content: flex-start; background: linear-gradient(#707070, #505050); border: 2px solid #3a3a3a; padding-top: 6px; }
    .clip .biglabel { margin-top: 3px; flex: 1; }
    .clip .caret { margin-bottom: 6px; }
    .center { margin: 0 auto; }

    .docs { display: flex; align-items: flex-end; height: 39px; padding-left: 16px; border-top: 2px solid #8a8a8a; background: #383838; gap: 4px; }
    .doctab { display: flex; align-items: center; justify-content: space-between; width: 206px; height: 32px; padding: 0 23px 0 30px; background: linear-gradient(#8c8c8c, #626262); clip-path: polygon(0 100%, 4% 90%, 8% 20%, 12% 0, 88% 0, 92% 20%, 96% 90%, 100% 100%); }
    .i18x { width: 18px; height: 18px; }
    .add { width: 31px; height: 23px; background: #505050; border: 1px solid #666; border-radius: 3px 14px 3px 14px; margin-bottom: 3px; }
    .strip { height: 6px; background: #5c5c5c; }

    .stage { position: relative; flex: 1; min-height: 500px; overflow: hidden; background: #212733; }
    .viewlabel { position: absolute; left: 2px; top: 5px; color: #05070c; }
    .scroll { position: absolute; right: 0; top: 0; bottom: 0; width: 14px; background: #3b3b3b; border-left: 10px solid #b9ccf0; }
    .thumb { position: absolute; right: 4px; top: 0; width: 10px; height: 91px; background: linear-gradient(#c4dbfb, #a8daff); }
    .cube { position: absolute; right: 30px; top: 12px; width: 124px; display: grid; grid-template-columns: 20px 84px 20px; grid-template-rows: 24px 84px 24px; place-items: center; color: #b5b5b5; font-family: "Noto Sans CJK SC", sans-serif; }
    .ring { position: absolute; left: 6px; top: 9px; width: 112px; height: 112px; border: 12px solid #474d58; border-radius: 50%; }
    .cube span, .cube button { position: relative; }
    .cube .n, .cube .s { grid-column: 2; }
    .cube .w { grid-column: 1; }
    .face { width: 48px; height: 48px; background: #a7a8a9; border: 1px solid #bbb; color: #4a5060; font-size: 28px; font-weight: 300; }
    .wcs { position: absolute; right: 57px; top: 158px; width: 70px; height: 27px; gap: 8px; background: #858a97; border: 2px solid #9ca1ad; border-radius: 6px; color: #3c4150; font-family: "Liberation Sans", sans-serif; font-size: 16px; }
    .wcs .caret { color: #a9aebb; }
    .navbar { position: absolute; right: 17px; top: 218px; width: 46px; height: 311px; background: #5c6067; border: 1px solid #747880; border-radius: 4px; display: flex; flex-direction: column; align-items: center; gap: 9px; padding-top: 24px; color: #3f4349; }
    .navbar svg { stroke: #42464d; }
    .navbar .caret { width: 8px; height: 5px; }
    .i35 { width: 36px; height: 36px; }
    .corner { position: absolute; right: 2px; top: 0; }
    .corner.low { top: auto; bottom: 2px; }
    .i12 { width: 13px; height: 13px; }
    .ime { position: absolute; display: flex; align-items: center; justify-content: space-between; background: #fff; color: #1b6fc9; font-weight: 700; font-size: 21px; padding: 0 5px 0 28px; }
    .ime.one { right: 71px; bottom: 140px; height: 37px; width: 289px; }
    .ime.two { right: 40px; bottom: 78px; height: 38px; width: 240px; border-radius: 3px; border: 1px solid #b8d0ea; }
    .badge { position: absolute; left: -25px; top: -6px; width: 50px; height: 50px; }
    .ime.two .badge { left: -29px; width: 52px; height: 52px; top: -8px; }
    .tip { position: absolute; left: 797px; top: 218px; display: flex; gap: 5px; }
    .tiplabel { display: flex; align-items: center; justify-content: space-between; width: 185px; height: 34px; padding: 0 6px 3px 4px; background: #8f8f92; border: 1px solid #111; border-bottom-width: 2px; color: #111; }
    .tipinput { width: 55px; height: 31px; background: #fff; border: 1px solid #111; padding: 2px 5px; display: flex; }
    .tipinput input { width: 33px; background: #1b74d6; color: #dbe8fa; line-height: 24px; }
    .i18 { width: 16px; height: 18px; margin-top: 5px; }
    .console { position: absolute; left: 321px; right: 320px; bottom: 0; font-family: "DejaVu Sans Mono", "Noto Sans CJK SC", monospace; font-size: 20px; }
    .history { display: flex; flex-direction: column; align-items: flex-start; gap: 7px; margin: 0 0 3px 92px; padding: 0; list-style: none; }
    .history li { padding: 0 4px; height: 24px; line-height: 23px; border-radius: 3px; background: rgba(112, 112, 112, 0.85); color: #f2f2f2; white-space: pre; }
    .history .old { background: rgba(96, 96, 96, 0.8); color: #b5b5b5; }
    .history .mid { color: #d8d8d8; }
    .en { font-size: 18px; white-space: pre; }
    .cmd { display: flex; height: 40px; border: 2px solid #77777b; border-radius: 4px; background: #fff; color: #111; line-height: 36px; }
    .cmdtools { display: flex; align-items: center; gap: 11px; width: 81px; padding-left: 8px; background: linear-gradient(#8a8a8a, #4e4e4e); margin-right: 6px; }
    .grip { height: 24px; border-left: 2px dotted #ddd; }
    .cmdtools button svg { width: 20px; height: 22px; }
    .cmd .hist { color: #777; gap: 4px; margin-right: 10px; }
    .cmd .chip { background: #d4d4d4; border-radius: 6px; height: 27px; padding: 0 3px; margin: 0 1px; align-self: center; }
    .key { color: #1717c8; }
    .cmd input { flex: 1; min-width: 0; }
    .cmd .open { width: 22px; }

    .layouts { display: flex; align-items: flex-start; justify-content: space-between; height: 42px; padding-left: 14px; border-top: 2px solid #6a6a6a; }
    .ltabs { display: flex; gap: 2px; }
    .ltabs button { height: 25px; width: 80px; background: #505050; color: #b4b4b4; clip-path: polygon(0 0, 100% 0, 92% 80%, 88% 100%, 12% 100%, 8% 80%); }
    .ltabs .sel { width: 74px; background: #737373; color: #fff; font-weight: 700; margin-right: -3px; }
    .ltabs .addl { width: 34px; clip-path: none; border-radius: 14px 3px 14px 3px; margin-left: 4px; }
    .vars { height: 40px; padding: 0 8px; border: 2px solid #7a7a7a; background: #4a4a4a; line-height: 36px; white-space: nowrap; }
    .status { display: flex; height: 40px; padding-left: 57px; gap: 2px; background: #383838; }
    .sg { display: flex; flex: none; border: 2px solid #7d7d7d; border-bottom: 0; background: #4a4a4a; }
    .sg .cell { width: 36px; }
    .sg .cell.on { background: #5b8fc9; border: 1px solid #4b5f7c; }
    .sg .arr { width: 22px; }
    .sep { width: 2px; background: #7d7d7d; }
    .sg.coords { width: 277px; justify-content: flex-end; padding-right: 7px; font-size: 17px; line-height: 38px; font-weight: 500; }
    .sg.model { width: 46px; justify-content: center; font-weight: 500; }
    .scale { gap: 5px; padding: 0 4px 0 4px; font-size: 16px; font-weight: 500; }
    .sg.units { flex: 1; }
    .units select { flex: 1; min-width: 60px; padding-left: 8px; font-weight: 500; }

    .taskbar { display: flex; align-items: stretch; justify-content: space-between; height: 46px; background: #121212; }
    .apps, .tray { display: flex; }
    .apps button { width: 56px; border-bottom: 4px solid transparent; padding-top: 3px; }
    .apps .run { width: 43px; margin: 0 7px; border-bottom-color: #76b9ed; }
    .apps .cur { width: 55px; margin: 0; background: #404040; border-bottom-color: #76b9ed; }
    .tray { align-items: center; padding-right: 8px; gap: 13px; }
    .tray .who { margin-right: 6px; }
    .tray .sogou { margin-left: 8px; }
    .tray .clock { padding: 0 17px 0 14px; font-size: 19px; }
    .tray .desk { border-left: 1px solid #777; height: 46px; width: 1px; margin-left: 15px; }
  `;

  private group(items: (Cell | "|" | "v")[], cls = "") {
    return html`<div class="sg ${cls}">${items.map((it) => {
      if (it === "|") return html`<span class="sep"></span>`;
      if (it === "v") return html`<button class="arr" aria-label="展开">${caret()}</button>`;
      const c = typeof it === "string" ? { i: it, on: false } : it;
      return html`<button class=${classMap({ cell: true, on: !!c.on })} aria-label=${c.i} aria-pressed=${c.on ? "true" : "false"}>${ico(c.i)}</button>`;
    })}</div>`;
  }

  private header() {
    return html`<header class="top">
      <button class="logo" aria-label="应用程序菜单"><svg class="i36" viewBox="0 0 36 36" aria-hidden="true">${ICONS.appLogo}</svg>${caret()}</button>
      <div class="titlebar">
        <div class="qat">
          ${["newDoc", "open", "save", "saveAs", "print"].map((n) => html`<button aria-label=${n}>${ico(n)}</button>`)}
          <button aria-label="放弃">${ico("undo")}${caret("caret tiny")}</button>
          <button class="dim" aria-label="重做">${ico("redo")}${caret("caret tiny")}</button>
          <button aria-label="自定义">${ico("qatMore")}</button>
        </div>
        <h1 class="title">Autodesk AutoCAD 20</h1>
        <div class="notice">育设学堂版权所有,翻录必究.录制老师:周老师</div>
        <div class="searchbox"></div>
        <div class="info">
          <button aria-label="搜索">${ico("binoc")}</button>
          <button class="login"><span>${ico("user")}登录</span>${caret("caret tiny")}</button>
          <button aria-label="应用商店">${ico("cart")}</button>
          <button aria-label="保持连接">${ico("share")}${caret("caret tiny")}</button>
          <span class="split"></span>
          <button aria-label="更多">${ico("more")}</button>
        </div>
        <div class="winctl">
          ${["winMin", "winMax", "winClose"].map((n) => html`<button aria-label=${n}>${ico(n)}</button>`)}
        </div>
      </div>
      <div class="menubar">
        <nav>${MENUS.map((m) => html`<button>${m}</button>`)}</nav>
        <div class="docctl">${["docMin", "docMax", "docClose"].map((n) => html`<button aria-label=${n}>${ico(n)}</button>`)}</div>
      </div>
    </header>
    <div class="tabs" role="tablist">
      ${TABS.map((t, i) => html`<button role="tab" class=${i ? "" : "sel"} aria-selected=${i ? "false" : "true"}>${t}</button>`)}
      <button class="fold" aria-label="最小化功能区"><svg class="i22" viewBox="0 0 22 14" aria-hidden="true">${ICONS.minimize}</svg>${caret("caret tiny")}</button>
    </div>`;
  }

  private ribbon() {
    return html`<div class="ribbon">
      <cad-panel name="绘图">
        ${big("line", "直线")}${big("pline", "多段线")}${big("circle", "圆", true)}${big("arc", "圆弧", true)}
        <div class="grid3">${small("rect", "矩形", true)}${small("ellipse", "椭圆", true)}${small("hatch", "图案填充", true)}</div>
      </cad-panel>
      <cad-panel name="修改"><div class="grid3 cols4">
        ${small("move", "移动")}${small("rotate", "旋转")}${small("trim", "修剪", true)}${small("erase", "删除")}
        ${small("copy", "复制")}${small("mirror", "镜像")}${small("fillet", "圆角", true)}${small("box3d", "分解")}
        ${small("stretch", "拉伸")}${small("scale", "缩放")}${small("array", "阵列", true)}${small("offset", "偏移")}
      </div></cad-panel>
      <cad-panel name="注释">
        <div class="inset">${big("text", "文字", true)}${big("dim", "标注")}</div>
        <div class="grid3 tight">${small("linear", "线性", true)}${small("leader", "引线", true)}${small("table", "表格")}</div>
      </cad-panel>
      <cad-panel name="图层">
        ${big("layers", "图层\n特性")}
        <div class="layercol">
          <div class="combo">${ico("bulb")}${ico("sunBig")}${ico("lockBig")}<span class="swatch"></span>
            <select aria-label="图层"><option>0</option></select>${caret()}</div>
          <div class="grid3 cols5">
            ${small("layOff", "关")}${small("layPrev", "隔离")}${small("layFrz", "冻结")}${small("layLock", "锁定")}${small("layCur", "置为当前")}
            ${small("layOn", "打开所有图层")}${small("layIso", "取消隔离")}${small("layThaw", "解冻")}${small("layUnlock", "解锁")}${small("layMatch", "匹配图层")}
          </div>
        </div>
      </cad-panel>
      <cad-panel name="块">
        ${big("insert", "插入")}
        <div class="grid3 snug">${small("blkNew", "创建")}${small("blkEdit", "编辑")}${small("blkAttr", "编辑属性", true)}</div>
      </cad-panel>
      <cad-panel name="特性" corner>
        ${big("match", "特性\n匹配")}
        <div class="grid3 tight">${["wheel", "lweight", "ltype"].map((n) => ico(n))}</div>
        <div class="props">
          <div class="combo"><span class="swatch soft"></span><select aria-label="对象颜色"><option>ByLayer</option></select>${caret()}</div>
          <div class="combo line"><span class="stroke"></span><select aria-label="线宽"><option>ByLayer</option></select>${caret()}</div>
          <div class="combo line"><span class="stroke"></span><select aria-label="线型"><option>ByLayer</option></select>${caret()}</div>
        </div>
      </cad-panel>
      <cad-panel name="组">
        ${big("group", "组")}
        <div class="grid3 tight">${small("grpOff", "解除编组")}${small("grpEdit", "组编辑")}${small("grpSel", "启用组选择")}</div>
      </cad-panel>
      <cad-panel name="实用工具">
        <div class="inset">${big("measure", "测量", true)}</div>
        <div class="grid3 tight">${small("qselect", "快速选择")}${small("selAll", "全部选择")}${small("calc", "计算器")}</div>
      </cad-panel>
      <button class="clip">${ico("paste", "i48", 48)}<span class="biglabel">剪贴板</span>${caret()}</button>
      <cad-panel name="视图" corner><div class="center">${big("base", "基点", true)}</div></cad-panel>
    </div>
    <div class="docs">
      <div class="doctab">2-25椭圆弧*<button aria-label="关闭">${ico("cross", "i18x")}</button></div>
      <button class="add" aria-label="新图形">${ico("plus")}</button>
    </div>
    <div class="strip"></div>`;
  }

  private stage() {
    return html`<main class="stage">
      <cad-drawing></cad-drawing>
      <div class="viewlabel">[−][俯视][二维线框]</div>
      <div class="tip">
        <label class="tiplabel" for="angle">指定起点角度或${ico("prompt", "i18")}</label>
        <div class="tipinput"><input id="angle" value="113" /></div>
      </div>
      <div class="cube"><div class="ring"></div>
        <span class="n">北</span><span class="w">西</span><button class="face">上</button><span>东</span><span class="s">南</span>
      </div>
      <button class="wcs">WCS ${caret()}</button>
      <div class="navbar">
        <button class="corner" aria-label="关闭">${ico("nDot", "i12")}</button>
        ${ico("nWheel", "i35", 36)}${caret()}${ico("nHand", "i35", 36)}${ico("nZoom", "i35", 36)}${caret()}${ico("nOrbit", "i35", 36)}${caret()}${ico("nShow", "i35", 36)}
        <button class="corner low" aria-label="选项">${ico("nDot", "i12")}</button>
      </div>
      <div class="ime one">${ico("sLogo", "badge")}<span>英</span>${["comma", "smile", "mic", "keyb", "person", "shirt", "tiles"].map((n) => ico(n))}</div>
      <div class="ime two">${ico("sLogo", "badge")}<span>中</span>${["moon", "comma2", "mic", "omega", "person2"].map((n) => ico(n))}</div>
      <div class="console">
        <ul class="history">
          <li class="old">指定椭圆弧的轴端点或<span class="en"> [</span>中心点<span class="en">(C)]:</span></li>
          <li class="mid">指定轴的另一个端点<span class="en">: 200</span></li>
          <li>指定另一条半轴长度或<span class="en"> [</span>旋转<span class="en">(R)]: 50</span></li>
        </ul>
        <div class="cmd">
          <div class="cmdtools"><span class="grip"></span><button aria-label="关闭">${ico("cmdX")}</button><button aria-label="自定义">${ico("wrench")}</button></div>
          <button class="hist" aria-label="最近使用的命令">${ico("cmdEl")}${caret("caret tiny")}</button>
          <label for="cmdline"><b class="en">ELLIPSE</b><span class="en"> </span>指定起点角度或<span class="en"> [</span></label><button class="chip">参数<span class="en">(<span class="key">P</span>)</span></button><span class="en">]:</span>
          <input id="cmdline" />
          <button class="open" aria-label="历史记录">${caret("caret up")}</button>
        </div>
      </div>
      <div class="scroll"></div><div class="thumb"></div>
    </main>`;
  }

  render() {
    return html`${this.header()}${this.ribbon()}${this.stage()}
      <div class="layouts">
        <div class="ltabs"><button class="sel">模型</button><button>布局1</button><button>布局2</button><button class="addl" aria-label="新建布局">${ico("plus")}</button></div>
        <div class="vars">DIMSCALE:&lt;1:3&gt; DIMSTY:&lt;ISO-25&gt; STYLE:&lt;Standard&gt;</div>
      </div>
      <div class="status">
        <div class="sg coords">2097.7031, 1506.6277, 0.0000</div>
        <button class="sg model">模型</button>
        ${this.group([on("grid"), "dots", "v"])}
        ${this.group(["infer", "|", on("dyn"), "|", "ortho", on("polar"), "v", "iso", "v", "|", on("track"), on("snap"), "v", "|", "lw", "|", on("trans"), "|", "cycle", "|", "cube", "v"])}
        ${this.group([on("ducs"), "filter", "v", on("gizmo"), "v"])}
        <div class="sg">
          <button class="cell on" aria-label="注释可见性">${ico("annoA")}</button><button class="cell" aria-label="自动缩放">${ico("annoB")}</button><button class="cell" aria-label="注释比例">${ico("annoC")}</button>
          <button class="scale">1:1 / 100%${caret()}</button>
        </div>
        ${this.group(["gear", "v", "|", "plusBig"])}
        <div class="sg units">
          <button class="cell" aria-label="单位">${ico("ruler")}</button>
          <select aria-label="图形单位"><option>小数</option></select><button class="arr" aria-label="展开">${caret()}</button>
          <span class="sep"></span><button class="cell" aria-label="快捷特性">${ico("props")}</button>
        </div>
        ${this.group(["winLock", "v", "|", "shapes"])}
        ${this.group([on("perf")])}
        ${this.group(["hardware"])}
        ${this.group(["full", "menu"])}
      </div>
      <footer class="taskbar">
        <div class="apps">
          ${["win", "cortana", "taskview", "edge"].map((n) => html`<button aria-label=${n}>${ico(n)}</button>`)}
          <button class="run" aria-label="Chrome">${ico("chrome")}</button>
          <button class="cur" aria-label="AutoCAD">${ico("acad")}</button>
          ${["word", "camG", "camR"].map((n) => html`<button class="run" aria-label=${n}>${ico(n)}</button>`)}
        </div>
        <div class="tray">
          <button class="who" aria-label="人脉">${ico("people")}</button>
          ${["chevUp", "flagTray", "battery", "sound", "wifi"].map((n) => html`<button aria-label=${n}>${ico(n)}</button>`)}
          <button>英</button><button class="sogou" aria-label="搜狗输入法">${ico("sLogo")}</button>
          <time class="clock">21:50</time><button aria-label="通知">${ico("notif")}</button><span class="desk"></span>
        </div>
      </footer>`;
  }
}
